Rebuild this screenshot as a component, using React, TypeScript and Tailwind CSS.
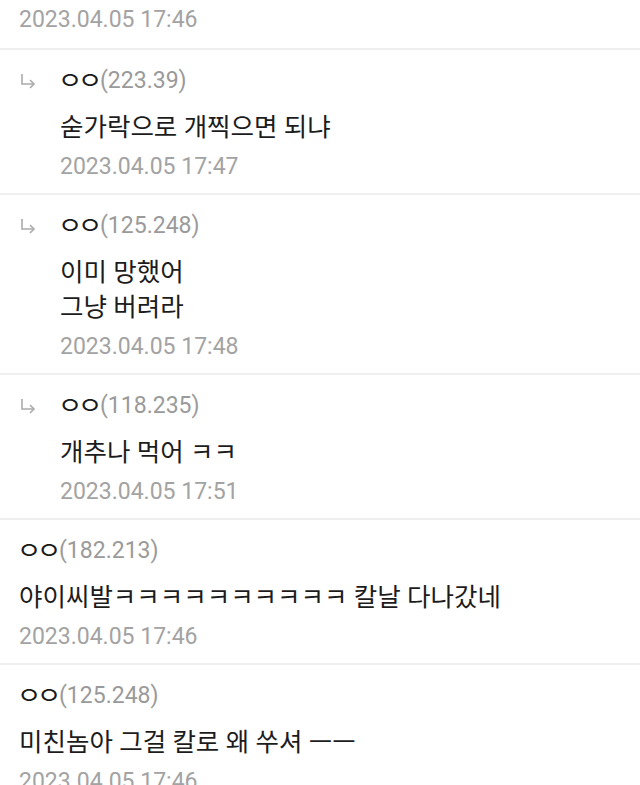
import React from "react";

type Comment = {
    reply?: boolean;
    nick: string;
    ip: string;
    lines: string[];
    date: string;
};

const comments: Comment[] = [
    { reply: true, nick: "ㅇㅇ", ip: "(223.39)", lines: ["숟가락으로 개찍으면 되냐"], date: "2023.04.05 17:47" },
    { reply: true, nick: "ㅇㅇ", ip: "(125.248)", lines: ["이미 망했어", "그냥 버려라"], date: "2023.04.05 17:48" },
    { reply: true, nick: "ㅇㅇ", ip: "(118.235)", lines: ["개추나 먹어 ㅋㅋ"], date: "2023.04.05 17:51" },
    { nick: "ㅇㅇ", ip: "(182.213)", lines: ["야이씨발ㅋㅋㅋㅋㅋㅋㅋㅋㅋㅋ 칼날 다나갔네"], date: "2023.04.05 17:46" },
    { nick: "ㅇㅇ", ip: "(125.248)", lines: ["미친놈아 그걸 칼로 왜 쑤셔 ㅡㅡ"], date: "2023.04.05 17:46" },
];

function ReplyArrow() {
    return (
        <svg width="16" height="16" viewBox="0 0 16 16" fill="none" stroke="#ababab" strokeWidth="1.6">
            <path d="M2 1 V11 H14" />
            <path d="M10 7 L14 11 L10 15" />
        </svg>
    );
}

function Nick({ text }: { text: string }) {
    return (
        <span className="inline-flex">
            {text.split("").map((ch, i) => (
                <span key={i} className="inline-flex w-[20px] justify-center">
                    <span className="inline-block mx-[-2px] text-[24px] text-[#1a1a1a] scale-x-[1.12]">{ch}</span>
                </span>
            ))}
        </span>
    );
}

function CommentRow({ c }: { c: Comment }) {
    return (
        <div className="flex pl-[19px] pt-[16px] pb-[11px]">
            {c.reply && (
                <div className="w-[41px] shrink-0 h-[30px] flex items-center pl-[1px]">
                    <ReplyArrow />
                </div>
            )}
            <div className="flex flex-col">
                {/* Nickname + IP */}
                <div className="h-[30px] leading-[30px] whitespace-nowrap flex items-center">
                    <Nick text={c.nick} />
                    <span className="text-[#9a9a9a] text-[23px]">{c.ip}</span>
                </div>

                {/* Body */}
                <div className="mt-[14px] text-[25.5px] leading-[35px] text-[#1c1c1c] whitespace-nowrap">
                    {c.lines.map((l, i) => (
                        <div key={i}>{l}</div>
                    ))}
                </div>

                {/* Date */}
                <div className="mt-[7px] h-[30px] leading-[30px] text-[23px] text-[#a3a3a3]">
                    {c.date}
                </div>
            </div>
        </div>
    );
}

export default function App() {
    return (
        <div
            className="w-[640px] h-[785px] overflow-hidden bg-white flex flex-col"
            style={{ fontFamily: 'Roboto, "Noto Sans CJK KR", sans-serif' }}
        >
            {/* Tail of previous comment */}
            <div className="pl-[19px] pt-[5px] pb-[13px]">
                <div className="h-[30px] leading-[30px] text-[23px] text-[#a3a3a3]">
                    2023.04.05 17:46
                </div>
            </div>

            {comments.map((c, i) => (
                <div key={i} className="flex flex-col shrink-0">
                    <div className="h-[2px] bg-[#efefef]" />
                    <CommentRow c={c} />
                </div>
            ))}
        </div>
    );
}
